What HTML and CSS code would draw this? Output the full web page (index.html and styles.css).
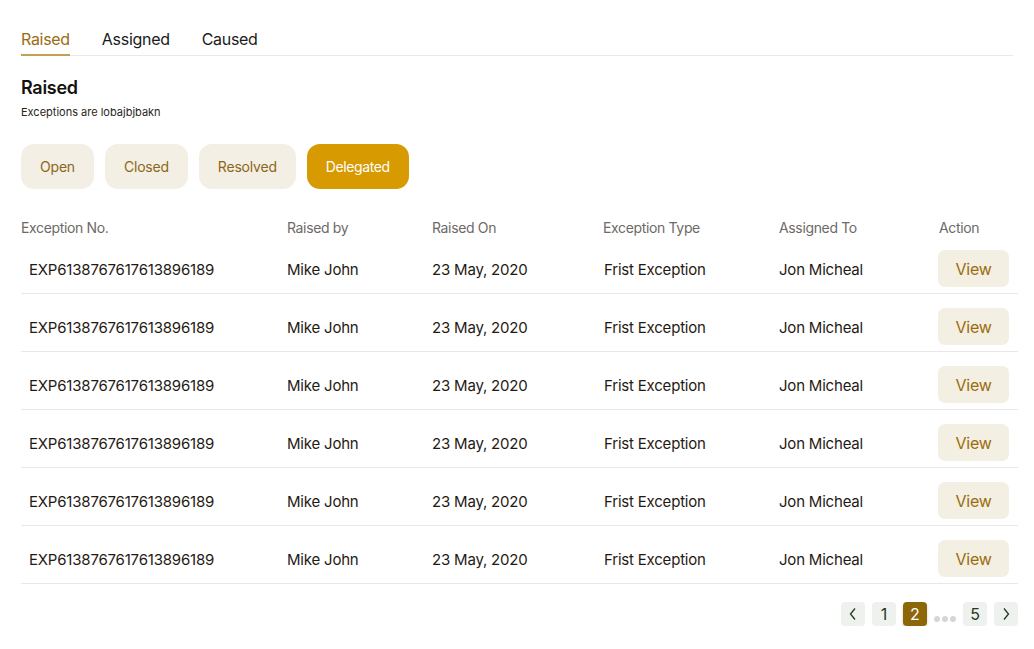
FILE: index.html
```html
<!DOCTYPE html>
<html>
<head>
<meta charset="utf-8">
<link rel="stylesheet" href="styles.css">
</head>
<body>
<div class="page">
  <nav class="tabs">
    <a class="tab active">Raised</a>
    <a class="tab">Assigned</a>
    <a class="tab">Caused</a>
  </nav>
  <h1 class="title">Raised</h1>
  <p class="subtitle">Exceptions are lobajbjbakn</p>
  <div class="filters">
    <button class="chip">Open</button>
    <button class="chip">Closed</button>
    <button class="chip">Resolved</button>
    <button class="chip selected">Delegated</button>
  </div>
  <div class="table">
    <div class="row head">
      <div>Exception No.</div><div>Raised by</div><div>Raised On</div><div>Exception Type</div><div>Assigned To</div><div>Action</div>
    </div>
    <div class="row body">
      <div class="id">EXP6138767617613896189</div><div>Mike John</div><div>23 May, 2020</div><div class="type">Frist Exception</div><div>Jon Micheal</div><div><button class="view">View</button></div>
    </div>
    <div class="row body">
      <div class="id">EXP6138767617613896189</div><div>Mike John</div><div>23 May, 2020</div><div class="type">Frist Exception</div><div>Jon Micheal</div><div><button class="view">View</button></div>
    </div>
    <div class="row body">
      <div class="id">EXP6138767617613896189</div><div>Mike John</div><div>23 May, 2020</div><div class="type">Frist Exception</div><div>Jon Micheal</div><div><button class="view">View</button></div>
    </div>
    <div class="row body">
      <div class="id">EXP6138767617613896189</div><div>Mike John</div><div>23 May, 2020</div><div class="type">Frist Exception</div><div>Jon Micheal</div><div><button class="view">View</button></div>
    </div>
    <div class="row body">
      <div class="id">EXP6138767617613896189</div><div>Mike John</div><div>23 May, 2020</div><div class="type">Frist Exception</div><div>Jon Micheal</div><div><button class="view">View</button></div>
    </div>
    <div class="row body">
      <div class="id">EXP6138767617613896189</div><div>Mike John</div><div>23 May, 2020</div><div class="type">Frist Exception</div><div>Jon Micheal</div><div><button class="view">View</button></div>
    </div>
  </div>
  <div class="pager">
    <button class="pg"><svg width="10" height="14" viewBox="0 0 10 14"><path d="M7 1.5 L2.5 7 L7 12.5" fill="none" stroke="#1e3a1e" stroke-width="1.3"/></svg></button>
    <button class="pg">1</button>
    <button class="pg current">2</button>
    <span class="dots"><i></i><i></i><i></i></span>
    <button class="pg">5</button>
    <button class="pg"><svg width="10" height="14" viewBox="0 0 10 14"><path d="M3 1.5 L7.5 7 L3 12.5" fill="none" stroke="#1e3a1e" stroke-width="1.3"/></svg></button>
  </div>
</div>
</body>
</html>
```
FILE: styles.css
```css
* { box-sizing: border-box; }
body {
  margin: 0;
  background: #fff;
  font-family: "Inter", "Liberation Sans", sans-serif;
  color: #1f1a14;
}
.page {
  padding: 28px 16px 0 21px;
}
.tabs {
  display: flex;
  gap: 32px;
  border-bottom: 1px solid #e9e9e9;
  margin-right: 5px;
}
.tab {
  font-size: 16px;
  line-height: 22px;
  letter-spacing: -0.3px;
  padding-bottom: 4px;
  border-bottom: 2px solid transparent;
  margin-bottom: -1px;
  color: #1a1a1a;
}
.tab.active {
  color: #9a6c12;
  border-bottom-color: #c4a055;
}
.title {
  margin: 20px 0 0;
  font-size: 18px;
  line-height: 24px;
  font-weight: 600;
  letter-spacing: -0.3px;
  color: #15120e;
}
.subtitle {
  margin: 4px 0 0;
  font-size: 11px;
  line-height: 16px;
  color: #2a2520;
}
.filters {
  display: flex;
  gap: 11px;
  margin-top: 24px;
}
.chip {
  height: 45px;
  padding: 0 19px;
  border: none;
  border-radius: 13px;
  background: #f4efe4;
  color: #8a6718;
  font-family: inherit;
  font-size: 14px;
  letter-spacing: -0.2px;
}
.chip.selected {
  background: #d79a00;
  color: #fff;
  letter-spacing: -0.4px;
}
.table {
  margin-top: 29px;
}
.row {
  display: grid;
  grid-template-columns: 266px 145px 171px 176px 160px 79px;
  align-items: center;
}
.row.head {
  height: 18px;
  font-size: 14px;
  letter-spacing: -0.35px;
  color: #6d6a66;
}
.row.body {
  padding: 14px 0 6px;
  border-bottom: 1px solid #e8e8e8;
  font-size: 15px;
  letter-spacing: -0.2px;
  color: #1f1a14;
}
.row.body > div:not(:last-child) { padding-top: 2px; }
.id { padding-left: 8px; }
.type { padding-left: 1px; }
.view {
  width: 71px;
  height: 37px;
  border: none;
  border-radius: 7px;
  background: #f4efe3;
  color: #9a6c0c;
  font-family: inherit;
  font-size: 16px;
  letter-spacing: -0.2px;
  margin-left: -1px;
}
.pager {
  display: flex;
  justify-content: flex-end;
  align-items: center;
  gap: 7px;
  margin-top: 18px;
}
.pg {
  width: 24px;
  height: 24px;
  padding: 0;
  border: none;
  border-radius: 4px;
  background: #eff1ee;
  color: #1e3a1e;
  font-family: inherit;
  font-size: 16px;
  display: flex;
  align-items: center;
  justify-content: center;
}
.pg.current {
  background: #8d6608;
  color: #fff;
  box-shadow: 0 2px 3px rgba(0,0,0,0.2);
}
.dots {
  display: flex;
  gap: 2px;
  align-items: center;
  padding-top: 10px;
}
.dots i {
  width: 6px;
  height: 6px;
  border-radius: 50%;
  background: #d6d6d6;
}
```
